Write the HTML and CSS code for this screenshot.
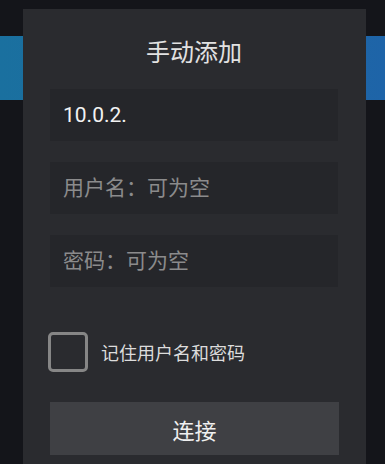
FILE: index.html
```html
<!DOCTYPE html>
<html lang="zh-CN">
<head>
<meta charset="utf-8">
<link rel="stylesheet" href="styles.css">
</head>
<body>
<div class="backdrop">
  <div class="band"></div>
</div>
<div class="dialog">
  <h1 class="title">手动添加</h1>
  <form class="form">
    <input class="field" type="text" value="10.0.2.">
    <input class="field" type="text" placeholder="用户名：可为空">
    <input class="field" type="password" placeholder="密码：可为空">
    <label class="remember">
      <input class="check" type="checkbox">
      <span class="remember-text">记住用户名和密码</span>
    </label>
    <button class="connect" type="button">连接</button>
  </form>
</div>
</body>
</html>
```

FILE: styles.css
```css
html, body {
  margin: 0;
  padding: 0;
  width: 385px;
  height: 464px;
  overflow: hidden;
  background: #14151a;
  font-family: Roboto, "Noto Sans CJK SC", sans-serif;
}

.backdrop {
  padding-top: 36px;
}

.band {
  height: 64px;
  background: linear-gradient(90deg, #1a709f 0%, #1c6aa4 60%, #1e64a8 100%);
}

.dialog {
  position: absolute;
  left: 23px;
  top: 9px;
  width: 343px;
  height: 470px;
  box-sizing: border-box;
  padding: 28px 28px 0 27px;
  background: #2a2b2f;
}

.title {
  margin: 0;
  height: 32px;
  line-height: 32px;
  font-size: 24px;
  font-weight: normal;
  text-align: center;
  color: #e2e2e2;
}

.form {
  display: flex;
  flex-direction: column;
  margin-top: 20px;
}

.field {
  appearance: none;
  border: none;
  outline: none;
  box-sizing: border-box;
  width: 288px;
  height: 52px;
  margin: 0 0 21px 0;
  padding: 0 0 0 13px;
  background: #25262a;
  font-family: Roboto, "Noto Sans CJK SC", sans-serif;
  font-size: 21px;
  color: #f2f2f2;
}

.field::placeholder {
  color: #8b8b8c;
}

.remember {
  display: flex;
  align-items: center;
  margin-top: 24px;
  margin-left: -2px;
  height: 40px;
}

.check {
  appearance: none;
  margin: 0;
  box-sizing: border-box;
  width: 40px;
  height: 40px;
  border: 3px solid #868686;
  border-radius: 5px;
  background: transparent;
}

.remember-text {
  margin-left: 13px;
  font-size: 18px;
  color: #dcdcdc;
}

.connect {
  appearance: none;
  border: none;
  margin-top: 30px;
  width: 289px;
  height: 53px;
  padding: 0;
  background: #3f4044;
  font-family: Roboto, "Noto Sans CJK SC", sans-serif;
  font-size: 22px;
  color: #f0f0f0;
}
```
